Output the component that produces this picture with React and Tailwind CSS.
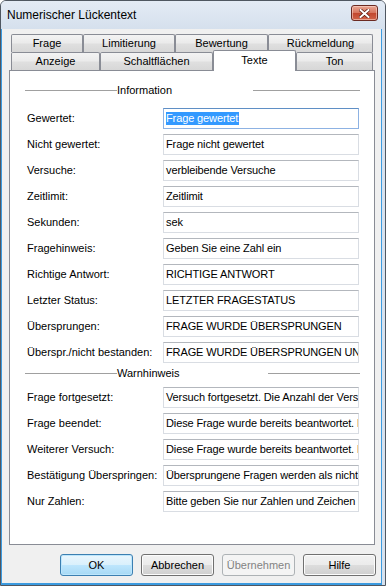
import React from "react";

const info = [
  ["Gewertet:", "Frage gewertet", true],
  ["Nicht gewertet:", "Frage nicht gewertet"],
  ["Versuche:", "verbleibende Versuche"],
  ["Zeitlimit:", "Zeitlimit"],
  ["Sekunden:", "sek"],
  ["Fragehinweis:", "Geben Sie eine Zahl ein"],
  ["Richtige Antwort:", "RICHTIGE ANTWORT"],
  ["Letzter Status:", "LETZTER FRAGESTATUS"],
  ["Übersprungen:", "FRAGE WURDE ÜBERSPRUNGEN"],
  ["Überspr./nicht bestanden:", "FRAGE WURDE ÜBERSPRUNGEN UND NICHT BESTANDEN"],
];

const warn = [
  ["Frage fortgesetzt:", "Versuch fortgesetzt. Die Anzahl der Versuche wurde verringert."],
  ["Frage beendet:", "Diese Frage wurde bereits beantwortet. Bitte fahren Sie fort."],
  ["Weiterer Versuch:", "Diese Frage wurde bereits beantwortet. Bitte fahren Sie fort."],
  ["Bestätigung Überspringen:", "Übersprungene Fragen werden als nicht beantwortet gewertet."],
  ["Nur Zahlen:", "Bitte geben Sie nur Zahlen und Zeichen ein."],
];

const tabBg =
  "bg-[linear-gradient(#f3f3f3,#ebebeb_45%,#dfdfdf_55%,#d7d7d7)]";

function Tab({ w, children }) {
  return (
    <div
      className={`${w} h-[18px] shrink-0 flex items-center justify-center border border-b-0 border-[#898c95] rounded-t-[2px] ${tabBg} leading-[13px]`}
    >
      {children}
    </div>
  );
}

function Row({ label, value, selected }) {
  return (
    <div className="flex items-center h-[21px] ml-[17px]">
      <div className="w-[136px] shrink-0 leading-[13px] text-black">{label}</div>
      <div
        className={`w-[196px] h-[21px] shrink-0 border bg-white flex items-center pl-[2px] pr-[2px] overflow-hidden whitespace-nowrap leading-[13px] tracking-[-0.12px] ${
          selected
            ? "border-[#8db2e3] border-t-[#5f8fc5]"
            : "border-[#d9dde3] border-t-[#b3b7bd]"
        }`}
      >
        {selected ? (
          <span className="bg-[#3399ff] text-white leading-[13px] pr-[1px]">{value}</span>
        ) : (
          <span className="text-black">{value}</span>
        )}
      </div>
    </div>
  );
}

function Header({ text, w }) {
  return (
    <div className="flex items-center h-[13px] ml-[15px] w-[335px]">
      <div className="w-[92px] h-px bg-[#a0a0a0] shrink-0" />
      <div className={`${w} shrink-0 leading-[13px] text-black`}>{text}</div>
      <div className="flex-1 h-px bg-[#a0a0a0]" />
    </div>
  );
}

const btnBase =
  "w-[73px] h-[22px] rounded-[3px] border flex items-center justify-center leading-[13px]";
const btnGray =
  "border-[#707070] bg-[linear-gradient(#f2f2f2,#ebebeb_50%,#dddddd_50%,#cfcfcf)] text-black shadow-[inset_0_0_0_1px_#fcfcfc]";

export default function App() {
  return (
    <div
      className="w-[386px] h-[586px] bg-white text-[11px]"
      style={{ fontFamily: '"Liberation Sans", Arial, sans-serif' }}
    >
      <div className="w-[386px] h-[586px] flex flex-col rounded-t-[6px] border border-[#4f5761] bg-[#d6e1ee] overflow-hidden">
        {/* Title bar */}
        <div className="h-[28px] shrink-0 flex items-start justify-between pl-[6px] pr-[7px] bg-[linear-gradient(#e3ebf5,#d5e0ed)]">
          <div className="text-[12px] leading-[14px] mt-[7px] text-black">Numerischer Lückentext</div>
          <div className="mt-[4px] w-[27px] h-[16px] rounded-[3px] border border-[#6b2a22] bg-[linear-gradient(#e9a794,#d7765f_48%,#c2472e_52%,#d0644a)] flex items-center justify-center shadow-[inset_0_0_0_1px_rgba(255,220,210,0.55)]">
            <svg width="11" height="9" viewBox="0 0 11 9">
              <path d="M1.5 1 L9.5 8 M9.5 1 L1.5 8" stroke="#5a1a12" strokeWidth="3.4" strokeLinecap="square" />
              <path d="M1.5 1 L9.5 8 M9.5 1 L1.5 8" stroke="#ffffff" strokeWidth="2" strokeLinecap="square" />
            </svg>
          </div>
        </div>

        {/* Client frame */}
        <div className="flex-1 flex mr-[3px] border-l border-r border-b-2 border-[#3c9be0]">
          <div className="flex-1 bg-[#f0f0f0] flex flex-col pt-[5px]">
            {/* Tabs */}
            <div className="ml-[9px] flex">
              <Tab w="w-[72px]">Frage</Tab>
              <Tab w="w-[92px]">Limitierung</Tab>
              <Tab w="w-[93px]">Bewertung</Tab>
              <Tab w="w-[105px]">Rückmeldung</Tab>
            </div>
            <div className="ml-[9px] flex items-end h-[18px]">
              <Tab w="w-[89px]">Anzeige</Tab>
              <Tab w="w-[113px]">Schaltflächen</Tab>
              <div className="w-[83px] h-[21px] shrink-0 relative top-[1px] z-10 flex items-start justify-center pt-[3px] border border-b-0 border-[#898c95] rounded-t-[2px] bg-white leading-[13px]">
                Texte
              </div>
              <Tab w="w-[77px]">Ton</Tab>
            </div>

            {/* Panel */}
            <div className="ml-[7px] w-[366px] h-[475px] border border-[#898c95] bg-white flex flex-col pt-[13px]">
              <Header text="Information" w="w-[136px]" />
              <div className="flex flex-col gap-[5px] mt-[11px]">
                {info.map(([l, v, s]) => (
                  <Row key={l} label={l} value={v} selected={s} />
                ))}
              </div>
              <div className="mt-[4px]">
                <Header text="Warnhinweis" w="w-[151px]" />
              </div>
              <div className="flex flex-col gap-[5px] mt-[7px]">
                {warn.map(([l, v]) => (
                  <Row key={l} label={l} value={v} />
                ))}
              </div>
            </div>

            {/* Buttons */}
            <div className="mt-[9px] flex justify-end gap-[8px] pr-[5px]">
              <div className={`${btnBase} border-[#3c7fb1] bg-[linear-gradient(#eaf6fd,#d9f0fc_50%,#bee6fd_50%,#a7d9f5)] shadow-[inset_0_0_0_1px_#bde6fc] text-black`}>
                OK
              </div>
              <div className={`${btnBase} ${btnGray}`}>Abbrechen</div>
              <div className={`${btnBase} border-[#adb2b5] bg-[#f4f4f4] text-[#838383]`}>Übernehmen</div>
              <div className={`${btnBase} ${btnGray}`}>Hilfe</div>
            </div>
          </div>
        </div>
      </div>
    </div>
  );
}
